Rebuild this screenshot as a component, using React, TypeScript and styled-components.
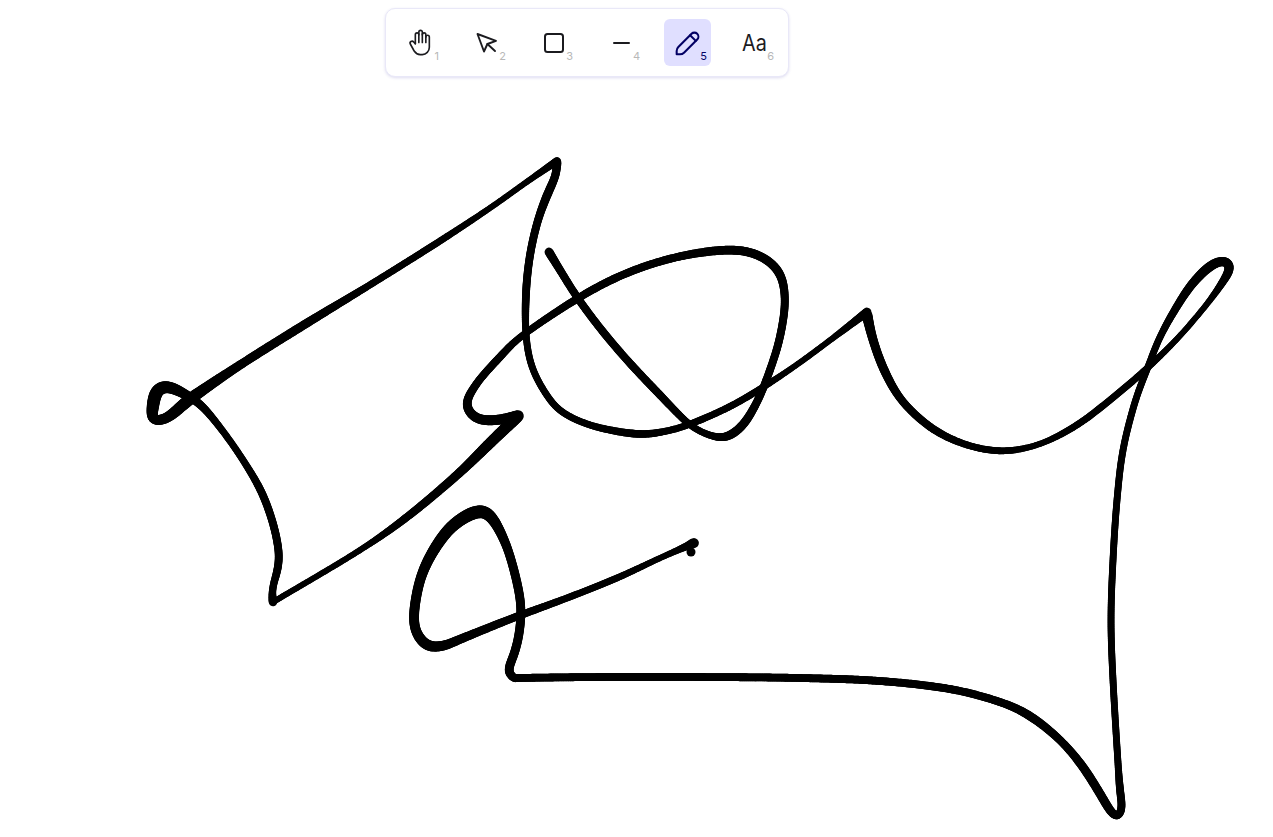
import React from 'react';
import styled, { createGlobalStyle } from 'styled-components';

const GlobalStyle = createGlobalStyle`
  html, body { margin: 0; padding: 0; height: 100%; background: #fff; }
  body { font-family: Inter, "Liberation Sans", sans-serif; overflow: hidden; }
`;

const Stage = styled.div`
  position: relative;
  width: 1273px;
  height: 837px;
  padding: 8px 0 0 385px;
  box-sizing: border-box;
`;

const Drawing = styled.svg`
  position: absolute;
  inset: 0;
`;

const Toolbar = styled.div`
  position: relative;
  display: inline-flex;
  gap: 20px;
  padding: 10px;
  background: #fff;
  border: 1px solid #e9e8f8;
  border-radius: 10px;
  box-shadow: 0 1px 3px rgba(70, 60, 170, 0.18);
`;

const Tool = styled.div<{ $active?: boolean }>`
  position: relative;
  display: flex;
  align-items: center;
  justify-content: center;
  width: 47px;
  height: 47px;
  border-radius: 6px;
  color: ${p => (p.$active ? '#030064' : '#1b1b1f')};
  background: ${p => (p.$active ? '#e0dfff' : 'transparent')};
`;

const Key = styled.span<{ $active?: boolean }>`
  position: absolute;
  right: 4px;
  bottom: 3px;
  font-size: 11px;
  line-height: 13px;
  color: ${p => (p.$active ? '#030064' : '#b8b8b8')};
`;

const Glyph = styled.span`
  font-size: 23px;
  color: #1b1b1f;
  transform: scaleX(0.86);
`;

const Icon = styled.svg<{ $nudge?: number }>`
  flex: none;
  fill: none;
  stroke: currentColor;
  stroke-linecap: round;
  stroke-linejoin: round;
  margin-left: ${p => p.$nudge || 0}px;
`;

type Pt = [number, number, number];

// one list per run of the pen between two sharp corners
const strokes: Pt[][] = [
  [
    [273, 602, 8], [272, 590, 6], [277, 572, 7], [279, 555, 7], [274, 527, 7], [262, 493, 7], [243, 460, 6], [222, 430, 6],
    [203, 407, 7], [190, 397, 8], [177, 390, 10], [165, 386, 11], [156, 391, 12], [153, 406, 12], [152, 420, 9],
    [163, 420, 9], [174, 413, 10], [190, 399, 11], [240, 365, 8], [307, 323, 8], [373, 283, 6], [440, 241, 6],
    [490, 208, 5], [528, 181, 5], [557, 161, 7],
  ],
  [
    [557, 162, 8], [556, 175, 7], [548, 193, 8], [538, 220, 7], [530, 255, 7], [526, 293, 7], [526, 335, 6],
    [532, 367, 6], [546, 394, 6], [562, 412, 6], [593, 426, 6], [637, 434, 7], [667, 431, 6], [693, 423, 6],
    [727, 408, 6], [757, 391, 6], [795, 366, 5], [833, 338, 5], [867, 312, 8],
  ],
  [
    [867, 315, 10], [873, 340, 8], [885, 372, 8], [903, 402, 7], [933, 429, 7], [967, 445, 6], [1003, 451, 6],
    [1040, 444, 5], [1077, 425, 6], [1110, 400, 6], [1143, 372, 6], [1177, 339, 5], [1207, 304, 5], [1224, 280, 7],
    [1231, 266, 9], [1224, 260, 8], [1210, 266, 9], [1192, 284, 8], [1176, 308, 7], [1160, 337, 6], [1148, 367, 6],
    [1135, 402, 6], [1123, 450, 6], [1117, 500, 6], [1113, 560, 6], [1111, 620, 6], [1113, 680, 6], [1118, 763, 6],
    [1120, 790, 7], [1122, 810, 7], [1117, 818, 7], [1109, 809, 8], [1102, 797, 8], [1083, 767, 8], [1060, 740, 7],
    [1030, 716, 8], [1000, 702, 7], [950, 689, 7], [880, 681, 7], [800, 678, 7], [700, 677, 7], [600, 677, 7], [515, 678, 7],
  ],
  [
    [515, 678, 7], [507, 673, 8], [512, 660, 8], [518, 640, 8], [521, 613, 8], [518, 587, 8], [507, 547, 8],
    [493, 519, 10], [483, 511, 12], [470, 514, 12], [450, 528, 11], [432, 553, 10], [420, 580, 9], [414, 613, 9],
    [416, 632, 9], [427, 646, 10], [443, 646, 9], [463, 638, 8], [513, 618, 7], [567, 598, 6], [617, 578, 6],
    [660, 558, 5], [685, 547, 6], [694, 543, 9],
  ],
  [
    [273, 602, 5], [357, 552, 5], [407, 517, 7], [457, 475, 8], [490, 443, 10], [517, 417, 11],
  ],
  [
    [518, 416, 11], [498, 420, 9], [477, 419, 9], [466, 405, 8], [477, 383, 7], [500, 357, 7], [523, 335, 6],
    [580, 297, 7], [627, 273, 7], [677, 257, 7], [727, 250, 8], [758, 255, 8], [779, 272, 8], [785, 300, 7],
    [780, 337, 7], [770, 370, 7], [758, 400, 7], [743, 425, 8], [727, 437, 8], [712, 436, 6], [690, 425, 6],
    [660, 395, 7], [627, 360, 7], [600, 328, 7], [577, 297, 7], [560, 270, 7], [549, 252, 8],
  ],
];

// catmull-rom through the traced points
const sample = (pts: Pt[]): Pt[] => {
  const out: Pt[] = [];
  for (let i = 0; i < pts.length - 1; i++) {
    const a = pts[Math.max(i - 1, 0)];
    const b = pts[i];
    const c = pts[i + 1];
    const d = pts[Math.min(i + 2, pts.length - 1)];
    const n = Math.max(2, Math.ceil(Math.hypot(c[0] - b[0], c[1] - b[1]) / 2));
    for (let s = 0; s < n; s++) {
      const t = s / n;
      const f = (k: number) =>
        0.5 * (2 * b[k] + (c[k] - a[k]) * t + (2 * a[k] - 5 * b[k] + 4 * c[k] - d[k]) * t * t + (3 * b[k] - a[k] - 3 * c[k] + d[k]) * t * t * t);
      out.push([f(0), f(1), b[2] + (c[2] - b[2]) * t]);
    }
  }
  out.push(pts[pts.length - 1]);
  return out;
};

// moving average takes the hand-traced wobble out, the window shrinks towards the ends
const smooth = (pts: Pt[], radius: number): Pt[] =>
  pts.map((_, i) => {
    const r = Math.min(radius, i, pts.length - 1 - i);
    const sum: Pt = [0, 0, 0];
    for (let j = i - r; j <= i + r; j++) {
      sum[0] += pts[j][0];
      sum[1] += pts[j][1];
      sum[2] += pts[j][2];
    }
    return [sum[0] / (2 * r + 1), sum[1] / (2 * r + 1), sum[2] / (2 * r + 1)];
  });

const Stroke = ({ points }: { points: Pt[] }) => {
  const s = smooth(smooth(sample(points), 4), 3);
  return (
    <g stroke="#000" strokeLinecap="round" fill="none">
      {s.slice(1).map((p, i) => (
        <line key={i} x1={s[i][0]} y1={s[i][1]} x2={p[0]} y2={p[1]} strokeWidth={p[2] + 0.8} />
      ))}
    </g>
  );
};

const HandIcon = () => (
  <Icon $nudge={1} width="28" height="29" viewBox="0 0 24 24" strokeWidth="1.4" preserveAspectRatio="none">
    <path d="M8 13v-7.5a1.5 1.5 0 0 1 3 0v6.5" />
    <path d="M11 5.5v-2a1.5 1.5 0 1 1 3 0v8.5" />
    <path d="M14 5.5a1.5 1.5 0 0 1 3 0v6.5" />
    <path d="M17 7.5a1.5 1.5 0 0 1 3 0v8.5a6 6 0 0 1 -6 6h-2h.208a6 6 0 0 1 -5.012 -2.7a69.74 69.74 0 0 1 -.196 -.3c-.312 -.479 -1.407 -2.388 -3.286 -5.728a1.5 1.5 0 0 1 .536 -2.022a1.867 1.867 0 0 1 2.28 .28l1.47 1.47" />
  </Icon>
);

const PointerIcon = () => (
  <Icon width="24" height="24" viewBox="0 0 24 24" strokeWidth="1.9">
    <path d="M2.5 3l6.5 17.5l3.4 -7.5l8.6 -3.2z" />
    <path d="M12.4 13l7.6 7" />
  </Icon>
);

const RectIcon = () => (
  <Icon width="24" height="24" viewBox="0 0 24 24" strokeWidth="2">
    <rect x="3" y="3" width="18" height="18" rx="2.5" />
  </Icon>
);

const LineIcon = () => (
  <Icon width="24" height="24" viewBox="0 0 24 24" strokeWidth="2">
    <path d="M5 12h15" />
  </Icon>
);

const PencilIcon = () => (
  <Icon width="34" height="34" viewBox="0 0 20 20" strokeWidth="1.2">
    <path d="m7.643 15.69 7.774-7.773a2.357 2.357 0 1 0-3.334-3.334L4.31 12.357a3.333 3.333 0 0 0-.977 2.357v1.953h1.953c.884 0 1.732-.352 2.357-.977Z" />
    <path d="m11.25 5.417 3.333 3.333" />
  </Icon>
);

const tools = [
  { key: 1, icon: <HandIcon /> },
  { key: 2, icon: <PointerIcon /> },
  { key: 3, icon: <RectIcon /> },
  { key: 4, icon: <LineIcon /> },
  { key: 5, icon: <PencilIcon />, active: true },
  { key: 6, icon: <Glyph>Aa</Glyph> },
];

const App = () => (
  <Stage>
    <GlobalStyle />
    <Drawing width="1273" height="837" viewBox="0 0 1273 837">
      {strokes.map((s, i) => (
        <Stroke key={i} points={s} />
      ))}
      <circle cx="691" cy="552" r="4.5" fill="#000" />
    </Drawing>
    <Toolbar>
      {tools.map(t => (
        <Tool key={t.key} $active={t.active}>
          {t.icon}
          <Key $active={t.active}>{t.key}</Key>
        </Tool>
      ))}
    </Toolbar>
  </Stage>
);

export default App;
